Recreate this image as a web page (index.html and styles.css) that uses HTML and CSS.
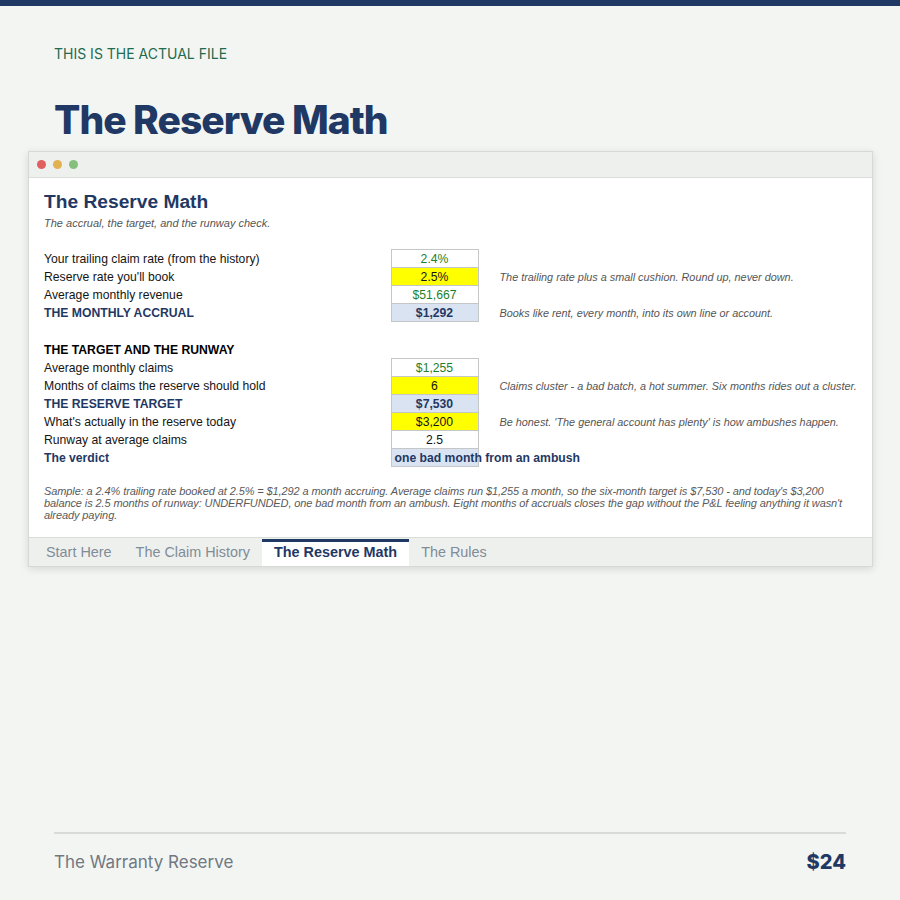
FILE: index.html
```html
<!DOCTYPE html>
<html>
<head>
<meta charset="utf-8" />
<meta name="viewport" content="width=device-width, initial-scale=1" />
<title>The Reserve Math</title>
<link rel="stylesheet" href="styles.css">
</head>
<body>

<div class="topBar"></div>

<div class="page">
	<div class="eyebrow">THIS IS THE ACTUAL FILE</div>
	<h1 class="headline">The Reserve Math</h1>

	<div class="window">
		<div class="titleBar">
			<span class="dot red"></span>
			<span class="dot yellow"></span>
			<span class="dot green"></span>
		</div>

		<div class="sheet">
			<div class="sheetTitle">The Reserve Math</div>
			<div class="sheetSub">The accrual, the target, and the runway check.</div>

			<table class="grid">
				<colgroup>
					<col class="colLabel">
					<col class="colVal">
					<col>
				</colgroup>
				<tr>
					<td class="label">Your trailing claim rate (from the history)</td>
					<td class="val input">2.4%</td>
					<td class="note"></td>
				</tr>
				<tr>
					<td class="label">Reserve rate you'll book</td>
					<td class="val set">2.5%</td>
					<td class="note">The trailing rate plus a small cushion. Round up, never down.</td>
				</tr>
				<tr>
					<td class="label">Average monthly revenue</td>
					<td class="val input">$51,667</td>
					<td class="note"></td>
				</tr>
				<tr>
					<td class="label key">THE MONTHLY ACCRUAL</td>
					<td class="val total">$1,292</td>
					<td class="note">Books like rent, every month, into its own line or account.</td>
				</tr>
				<tr class="blank"><td colspan="3"></td></tr>
				<tr class="head">
					<td class="label section">THE TARGET AND THE RUNWAY</td>
					<td></td>
					<td></td>
				</tr>
				<tr>
					<td class="label">Average monthly claims</td>
					<td class="val input">$1,255</td>
					<td class="note"></td>
				</tr>
				<tr>
					<td class="label">Months of claims the reserve should hold</td>
					<td class="val set">6</td>
					<td class="note">Claims cluster - a bad batch, a hot summer. Six months rides out a cluster.</td>
				</tr>
				<tr>
					<td class="label key">THE RESERVE TARGET</td>
					<td class="val total">$7,530</td>
					<td class="note"></td>
				</tr>
				<tr>
					<td class="label">What's actually in the reserve today</td>
					<td class="val set">$3,200</td>
					<td class="note">Be honest. 'The general account has plenty' is how ambushes happen.</td>
				</tr>
				<tr>
					<td class="label">Runway at average claims</td>
					<td class="val">2.5</td>
					<td class="note"></td>
				</tr>
				<tr>
					<td class="label key">The verdict</td>
					<td class="val total verdict"><span>one bad month from an ambush</span></td>
					<td class="note"></td>
				</tr>
			</table>

			<p class="sample">Sample: a 2.4% trailing rate booked at 2.5% = $1,292 a month accruing. Average claims run $1,255 a month, so the six-month target is $7,530 - and today's $3,200 balance is 2.5 months of runway: UNDERFUNDED, one bad month from an ambush. Eight months of accruals closes the gap without the P&amp;L feeling anything it wasn't already paying.</p>
		</div>

		<div class="tabs">
			<div class="tab">Start Here</div>
			<div class="tab">The Claim History</div>
			<div class="tab active">The Reserve Math</div>
			<div class="tab">The Rules</div>
		</div>
	</div>

	<div class="footer">
		<span class="product">The Warranty Reserve</span>
		<span class="price">$24</span>
	</div>
</div>

</body>
</html>
```

FILE: styles.css
```css
html, body {
	margin: 0;
	padding: 0;
	width: 100%;
	height: 100%;
	background: rgb(243 245 243);
	font-family: "Liberation Sans", Arial, sans-serif;
	color: rgb(20 20 20);
}

body {
	display: flex;
	flex-direction: column;
}

.topBar {
	height: 6px;
	background: rgb(31 56 100);
	flex: none;
}

.page {
	flex: 1;
	display: flex;
	flex-direction: column;
	padding: 38px 54px 26px;
}

.eyebrow {
	font-family: Inter, "Open Sans", sans-serif;
	font-size: 14px;
	line-height: 20px;
	color: rgb(30 107 78);
}

.headline {
	margin: 32px 0 0;
	font-family: Inter, "Open Sans", sans-serif;
	font-weight: 800;
	font-size: 39px;
	line-height: 48px;
	letter-spacing: -1px;
	color: rgb(31 56 100);
}

/* spreadsheet window */

.window {
	margin: 7px -27px 0 -26px;
	background: white;
	border: 1px solid rgb(214 217 214);
	box-shadow: 0 2px 8px rgba(0, 0, 0, 0.12);
	display: flex;
	flex-direction: column;
}

.titleBar {
	height: 25px;
	background: rgb(238 240 238);
	border-bottom: 1px solid rgb(220 222 220);
	display: flex;
	align-items: center;
	gap: 7px;
	padding-left: 8px;
}

.dot {
	width: 9px;
	height: 9px;
	border-radius: 50%;
}

.dot.red { background: rgb(224 96 96); }
.dot.yellow { background: rgb(226 178 82); }
.dot.green { background: rgb(132 192 124); }

.sheet {
	padding: 12px 15px 16px;
}

.sheetTitle {
	font-size: 19.2px;
	line-height: 24px;
	font-weight: bold;
	color: rgb(31 56 100);
}

.sheetSub {
	margin-top: 2px;
	font-size: 11px;
	line-height: 14px;
	font-style: italic;
	color: rgb(85 85 85);
}

.grid {
	margin-top: 19px;
	border-collapse: collapse;
	table-layout: fixed;
	width: 813px;
	font-size: 12.2px;
}

.grid .colLabel { width: 347px; }
.grid .colVal { width: 87px; }

.grid td {
	height: 17px;
	line-height: 16px;
	padding: 0;
	white-space: nowrap;
}

.grid .blank td { height: 19px; }

.grid .key {
	font-weight: bold;
	color: rgb(31 56 100);
}

.grid .section {
	font-weight: bold;
	color: black;
}

.grid .val {
	text-align: center;
	border: 1px solid rgb(196 198 200);
}

.grid .input {
	color: rgb(30 128 40);
}

.grid .set {
	background: rgb(255 255 0);
}

.grid .total {
	background: rgb(218 227 242);
	font-weight: bold;
	color: rgb(31 56 100);
}

.grid .verdict {
	text-align: left;
	position: relative;
}

.grid .verdict span {
	position: absolute;
	left: 3px;
	top: 1px;
}

.grid .note {
	padding-left: 21px;
	font-size: 10.85px;
	font-style: italic;
	color: rgb(85 85 85);
}

.sample {
	margin: 18px 0 0;
	font-size: 11px;
	line-height: 12px;
	font-style: italic;
	color: rgb(90 90 90);
	letter-spacing: -0.1px;
}

/* sheet tabs */

.tabs {
	height: 28px;
	background: rgb(238 240 238);
	border-top: 1px solid rgb(218 220 218);
	display: flex;
	padding-left: 5px;
}

.tab {
	padding: 0 12px;
	display: flex;
	align-items: center;
	font-size: 14.4px;
	color: rgb(128 140 150);
}

.tab.active {
	margin-top: 1px;
	padding-bottom: 4px;
	border-top: 3px solid rgb(31 56 100);
	background: white;
	font-weight: bold;
	color: rgb(31 56 100);
}

/* footer */

.footer {
	margin-top: auto;
	border-top: 2px solid rgb(216 219 216);
	padding-top: 16px;
	display: flex;
	justify-content: space-between;
	align-items: center;
	font-family: Inter, "Open Sans", sans-serif;
}

.product {
	font-size: 17px;
	color: rgb(112 120 130);
}

.price {
	font-size: 20px;
	font-weight: 800;
	color: rgb(31 56 100);
}
```
